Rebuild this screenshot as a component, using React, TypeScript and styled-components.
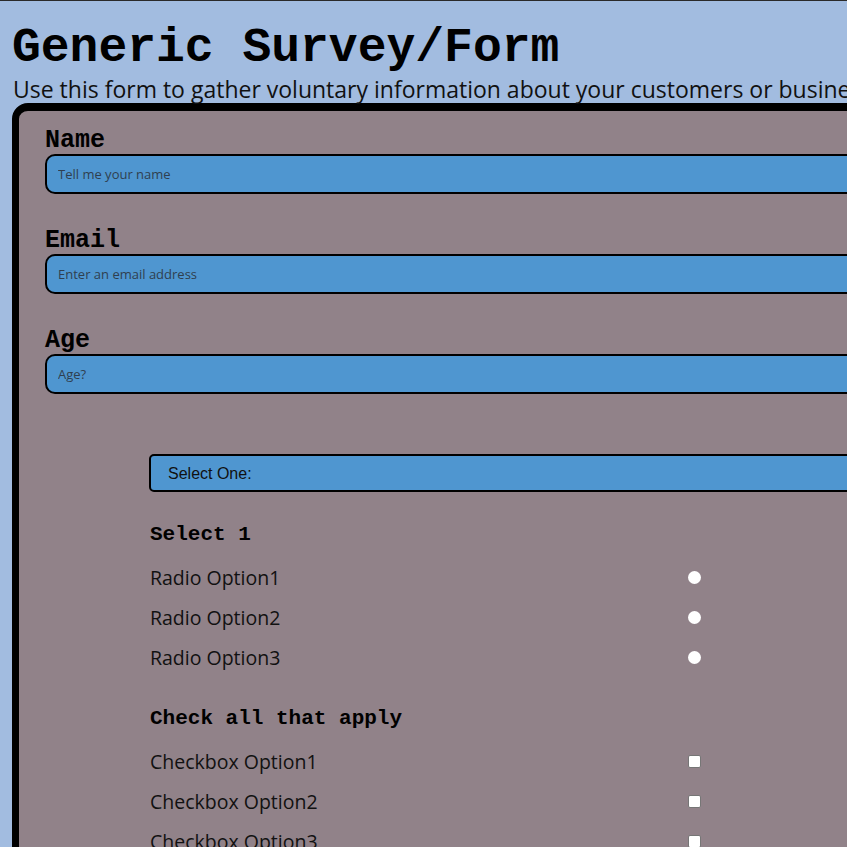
import React from "react";
import styled, { createGlobalStyle } from "styled-components";

const Global = createGlobalStyle`
  html, body { margin: 0; padding: 0; overflow: hidden; }
  body {
    background: #a2bce0;
    border-top: 1px solid #2a2a2a;
    font-family: "Open Sans", "Liberation Sans", sans-serif;
    color: #111;
  }
`;

const Page = styled.div`
  width: 1300px;
  padding: 20px 0 0 12px;
`;

const Title = styled.h1`
  margin: 0;
  font-family: "Liberation Mono", "Courier New", monospace;
  font-weight: 700;
  font-size: 48px;
  line-height: 54px;
  color: #000;
`;

const Subtitle = styled.p`
  margin: 0 0 0 1px;
  font-size: 23px;
  line-height: 28px;
  color: #111;
`;

const Card = styled.form`
  background: #918289;
  border: 7px solid #000;
  border-top-width: 8px;
  border-radius: 16px;
  padding: 16px 0 0 26px;
  height: 900px;
`;

const Field = styled.div`
  display: flex;
  flex-direction: column;
  margin-bottom: 33px;
`;

const Label = styled.label`
  font-family: "Liberation Mono", "Courier New", monospace;
  font-weight: 700;
  font-size: 25px;
  line-height: 27px;
  color: #000;
`;

const TextInput = styled.input`
  box-sizing: border-box;
  height: 40px;
  width: 1100px;
  background: #4f96d0;
  border: 2px solid #000;
  border-radius: 10px;
  padding: 0 11px;
  font-family: "Open Sans", sans-serif;
  font-size: 13px;
  color: #222;
  &::placeholder { color: #2f3f4f; }
`;

const Group = styled.div`
  padding: 27px 0 0 104px;
  display: flex;
  flex-direction: column;
`;

const Select = styled.select`
  box-sizing: border-box;
  height: 38px;
  width: 1000px;
  background: #4f96d0;
  border: 2px solid #000;
  border-radius: 5px;
  padding: 0 17px;
  font-family: "Liberation Sans", Arial, sans-serif;
  font-size: 16px;
  color: #111;
  appearance: none;
`;

const GroupTitle = styled.div<{ $top: number }>`
  font-family: "Liberation Mono", "Courier New", monospace;
  font-weight: 700;
  font-size: 21px;
  line-height: 24px;
  color: #000;
  margin: ${(p) => p.$top}px 0 10px 1px;
`;

const Option = styled.label`
  display: grid;
  grid-template-columns: 538px 13px;
  align-items: center;
  height: 40px;
  padding-left: 1px;
  font-size: 19.5px;
  color: #111;
`;

const Radio = styled.span`
  width: 13px;
  height: 13px;
  border-radius: 50%;
  background: #fff;
`;

const Check = styled.span`
  box-sizing: border-box;
  width: 13px;
  height: 13px;
  border-radius: 2px;
  background: #fff;
  border: 1px solid #767676;
`;

export default function App() {
  return (
    <>
      <Global />
      <Page>
        <Title>Generic Survey/Form</Title>
        <Subtitle>
          Use this form to gather voluntary information about your customers or business partners.
        </Subtitle>
        <Card>
          <Field>
            <Label>Name</Label>
            <TextInput placeholder="Tell me your name" />
          </Field>
          <Field>
            <Label>Email</Label>
            <TextInput placeholder="Enter an email address" />
          </Field>
          <Field>
            <Label>Age</Label>
            <TextInput placeholder="Age?" />
          </Field>
          <Group>
            <Select defaultValue="">
              <option value="">Select One:</option>
            </Select>
            <GroupTitle $top={31}>Select 1</GroupTitle>
            {[1, 2, 3].map((n) => (
              <Option key={n}>
                Radio Option{n}
                <Radio />
              </Option>
            ))}
            <GroupTitle $top={30}>Check all that apply</GroupTitle>
            {[1, 2, 3].map((n) => (
              <Option key={n}>
                Checkbox Option{n}
                <Check />
              </Option>
            ))}
          </Group>
        </Card>
      </Page>
    </>
  );
}
